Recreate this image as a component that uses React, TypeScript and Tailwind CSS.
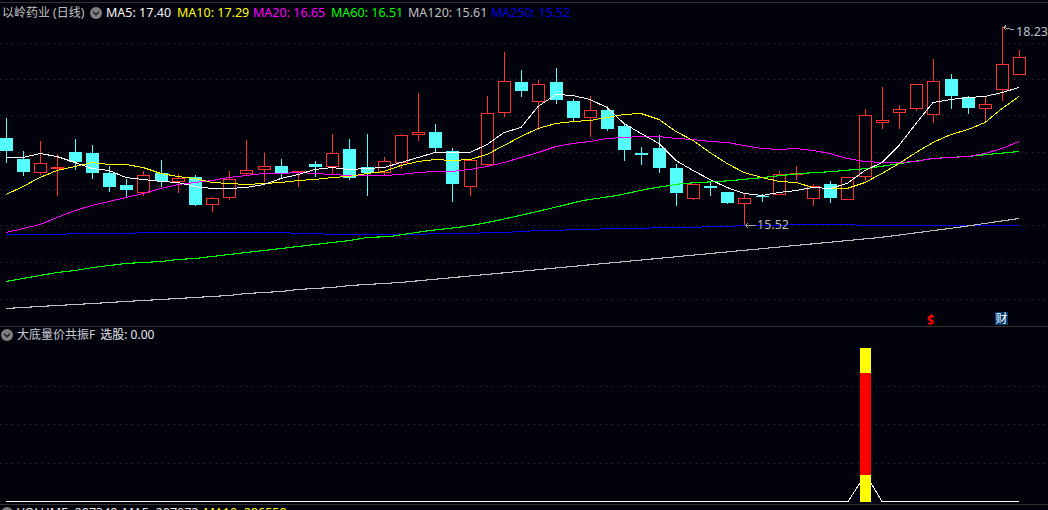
import React from "react";

const BG = "#02020c";
const XS = [6,23,40,57,75,92,109,126,143,161,178,195,212,229,246,264,281,298,315,332,349,367,384,401,418,435,452,470,487,504,521,538,556,573,590,607,624,641,659,676,693,710,727,744,762,779,796,813,830,847,865,882,899,916,933,951,968,985,1002,1019];

// kind, wickTop, wickBottom, bodyTop, bodyBottom
type C = ["u" | "d", number, number, number, number];
const CANDLES: C[] = [
  ["d",118,163,138,151],["d",151,176,159,172],["u",141,175,163,173],["u",154,196,167,169],["d",139,170,152,162],
  ["d",145,179,153,173],["d",166,192,173,187],["d",179,197,185,190],["u",171,196,175,193],["d",160,187,173,181],
  ["u",174,193,178,182],["d",175,206,177,205],["u",197,212,198,205],["u",171,200,179,198],["u",140,176,170,174],
  ["u",153,182,166,170],["d",159,178,166,173],["u",171,187,171,173],["d",161,177,164,167],["u",134,175,153,167],
  ["d",139,180,149,178],["d",134,196,167,173],["u",157,175,161,173],["u",134,169,135,163],["u",93,141,132,135],
  ["d",124,153,132,148],["d",148,202,151,184],["u",160,196,160,187],["u",96,167,113,165],["u",52,117,81,113],
  ["d",70,97,82,91],["u",80,130,84,102],["d",68,104,82,100],["d",99,121,101,118],["u",96,137,110,118],
  ["d",106,131,110,129],["d",123,161,126,150],["d",147,165,153,155],["d",135,173,148,168],["d",164,206,168,193],
  ["u",184,200,184,199],["d",182,196,186,188],["d",192,204,192,203],["u",194,225,198,204],["d",194,202,196,197],
  ["u",171,195,174,195],["u",166,180,173,175],["u",184,206,186,199],["d",181,203,184,198],["u",177,200,177,200],
  ["u",109,181,115,177],["u",87,129,120,123],["u",105,129,109,113],["u",84,111,84,109],["u",59,123,81,115],
  ["d",74,109,79,96],["d",96,114,97,108],["u",96,123,104,109],["u",27,101,64,90],["u",50,75,57,75],
];

const pairs = (ys: number[]) => ys.map((y, i) => `${XS[i]},${y + 0.5}`).join(" ");

const MA5 = pairs([157,157,153,156,162,168,170,177,179,181,182,186,188,188,187,184,178,174,169,167,169,168,167,162,157,152,152,152,144,132,127,106,94,95,99,107,123,133,143,160,170,179,187,193,195,192,190,187,188,183,170,162,145,123,102,99,97,96,92,87]);
const MA10 = pairs([194,186,177,170,166,162,164,164,167,173,176,178,182,183,184,183,182,180,179,177,176,173,171,165,161,159,160,159,154,145,136,128,123,121,120,117,114,113,119,131,140,152,163,172,177,181,182,187,188,188,182,173,163,152,142,134,129,122,108,96]);
const MA20 = pairs([232,228,224,217,210,205,201,197,193,188,184,182,180,177,175,173,173,172,173,174,175,175,175,174,172,171,171,169,166,162,157,152,146,143,141,138,137,136,136,138,139,141,142,145,148,149,148,150,153,158,161,162,162,161,158,157,156,153,148,141]);
const MA60 = "6,281.5 23,278.5 40,275.5 57,272.5 75,270.5 93,267.5 109,265.5 126,263.5 143,262.5 161,261.5 178,259.5 195,258.5 212,256.5 229,254.5 246,252.5 264,250.5 281,248.5 298,246.5 315,244.5 332,242.5 350,240.5 367,237.5 390,236.5 403,234.5 430,230.5 457,227.5 477,224.5 497,220.5 520,215.5 550,208.5 583,200.5 617,195.5 650,188.5 683,183.5 700,182.5 733,180.5 763,177.5 800,173.5 833,171.5 867,168.5 900,163.5 933,158.5 967,156.5 1019,151.5";
const MA120 = "6,308.5 23,307.5 40,306.5 57,305.5 75,304.5 93,303.5 109,302.5 126,301.5 143,300.5 161,299.5 178,298.5 195,297.5 212,296.5 229,295.5 246,293.5 264,292.5 281,291.5 298,289.5 315,288.5 332,287.5 350,285.5 400,282.5 615,262.5 880,237.5 957,227.5 1019,218.5";
const MA250: [number, number, number][] = [[6,66,234],[66,135,233],[135,290,232],[290,324,233],[324,427,234],[427,480,233],[480,513,232],[513,530,231],[530,565,230],[565,600,229],[600,650,228],[650,702,227],[702,735,226],[735,788,225],[788,857,224],[857,1019,225]];

const GRID1 = [43, 79, 115, 152, 189, 225, 262, 299];
const GRID2 = [386, 424, 463];

function Candle({ x, c }: { x: number; c: C }) {
  const [kind, wt, wb, bt, bb] = c;
  if (kind === "d") {
    return (
      <g fill="#54fcfc">
        <rect x={x} y={wt} width={1} height={wb - wt} />
        <rect x={x - 6} y={bt} width={13} height={bb - bt} />
      </g>
    );
  }
  return (
    <g>
      {bt > wt && <rect x={x} y={wt} width={1} height={bt - wt} fill="#ff3232" />}
      {wb > bb && <rect x={x} y={bb} width={1} height={wb - bb} fill="#ff3232" />}
      <rect x={x - 5.5} y={bt + 0.5} width={12} height={Math.max(bb - bt - 1, 1)} fill={BG} stroke="#ff3232" />
    </g>
  );
}

function Chevron({ className }: { className: string }) {
  return (
    <svg viewBox="0 0 12 12" className={className}>
      <circle cx="6" cy="6" r="6" fill="#7f7f7f" />
      <path d="M3 4.8 L6 7.8 L9 4.8" fill="none" stroke="#20202a" strokeWidth="1.5" />
    </svg>
  );
}

function Grid({ ys }: { ys: number[] }) {
  return (
    <g>
      {ys.map((y) => (
        <line key={y} x1="0" x2="1048" y1={y + 0.5} y2={y + 0.5} stroke="#3a3a3a" strokeDasharray="1 5" />
      ))}
    </g>
  );
}

export default function App() {
  return (
    <div
      className="flex h-[510px] w-[1048px] flex-col overflow-hidden bg-[#02020c] text-[12px] leading-[16px]"
      style={{ fontFamily: '"Noto Sans", "Noto Sans CJK SC", sans-serif' }}
    >
      <div className="flex h-[3px] shrink-0 border-b border-[#333333]" />

      <section className="relative flex h-[323px] shrink-0 flex-col">
        <div className="flex h-[20px] shrink-0 items-center whitespace-nowrap pl-[2px] text-[12.5px]">
          <span className="w-[85px] text-[12px] text-[#c0c0c0]">以岭药业 (日线)</span>
          <Chevron className="ml-[3px] h-[12px] w-[12px]" />
          <span className="ml-[4px] w-[71px] text-[#f4f4f4]">MA5: 17.40</span>
          <span className="w-[76px] text-[#ffff00]">MA10: 17.29</span>
          <span className="w-[78px] text-[#ff00ff]">MA20: 16.65</span>
          <span className="w-[77px] text-[#00ff00]">MA60: 16.51</span>
          <span className="w-[83px] text-[#c0c0c0]">MA120: 15.61</span>
          <span className="text-[#0000e0]">MA250: 15.52</span>
        </div>
        <svg viewBox="0 23 1048 303" className="block h-[303px] w-[1048px]" shapeRendering="crispEdges">
          <Grid ys={GRID1} />
          {CANDLES.map((c, i) => (
            <Candle key={i} x={XS[i]} c={c} />
          ))}
          {MA250.map(([a, b, y]) => (
            <rect key={a} x={a} y={y} width={b - a} height={1} fill="#0000ff" />
          ))}
          <g fill="none">
            <polyline points={MA120} stroke="#c0c0c0" strokeWidth="1.1" />
            <polyline points={MA60} stroke="#00ff00" strokeWidth="1.1" />
            <polyline points={MA20} stroke="#ff00ff" />
            <polyline points={MA10} stroke="#ffff00" />
            <polyline points={MA5} stroke="#ffffff" />
          </g>
          <g fill="none" stroke="#a8a8a8">
            <path d="M1003.5 27.5 L1014 30 M1003.5 27.5 L1006 25.5 M1003.5 27.5 L1006 30" />
            <path d="M745.5 225.5 L756 225.5 M745.5 225.5 L748 223 M745.5 225.5 L748 228" />
          </g>
          <path d="M931.5 314 L934 316.5 H929 Z" fill="#ff0000" />
        </svg>
        <span className="absolute left-[1016px] top-[21px] text-[12.5px] text-[#b8c0c8]">18.23</span>
        <span className="absolute left-[757px] top-[214px] text-[12.5px] text-[#b8b8b8]">15.52</span>
        <span className="absolute left-[927px] top-[311px] text-[12px] font-bold leading-[14px] text-[#ff0000]">$</span>
        <span className="absolute left-[995px] top-[309px] flex h-[13px] w-[13px] items-center justify-center bg-[#003a6e] text-[12px] leading-[13px] text-white">财</span>
      </section>

      <section className="flex h-[178px] shrink-0 flex-col border-t border-[#333333]">
        <div className="mb-[3px] flex h-[16px] shrink-0 items-center whitespace-nowrap pl-[1px] text-[12px] text-[#c8ccd4]">
          <Chevron className="h-[12px] w-[12px]" />
          <span className="ml-[4px]">大底量价共振F</span>
          <span className="ml-[5px] text-[#e4e8f0]">选股: 0.00</span>
        </div>
        <svg viewBox="0 346 1048 158" className="block h-[158px] w-[1048px]" shapeRendering="crispEdges">
          <Grid ys={GRID2} />
          <polyline points="6,501.5 848,501.5 860,483 871,483 882,501.5 1019,501.5" fill="none" stroke="#ffffff" />
          <rect x="860" y="348" width="11" height="25" fill="#ffff00" />
          <rect x="860" y="373" width="11" height="102" fill="#ff0000" />
          <rect x="860" y="475" width="11" height="27" fill="#ffff00" />
        </svg>
      </section>

      <section className="flex h-[16px] shrink-0 items-center whitespace-nowrap border-t border-[#333333] pl-[1px] text-[12.5px]">
        <Chevron className="h-[12px] w-[12px]" />
        <span className="ml-[4px] text-[#e8e8e8]">VOLUME: 287348</span>
        <span className="ml-[5px] text-[#e8e8e8]">MA5: 287072</span>
        <span className="ml-[5px] text-[#ffff00]">MA10: 286558</span>
      </section>
    </div>
  );
}
